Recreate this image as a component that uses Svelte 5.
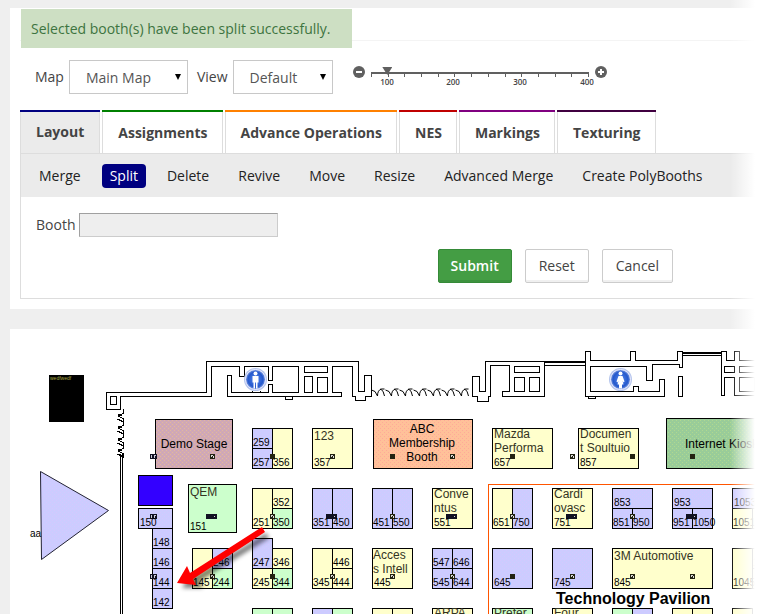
<script>
  let mapName = $state('Main Map');
  let view = $state('Default');
  let zoom = $state(100);
  let booth = $state('');

  const tabs = [
    { name: 'Layout', color: '#000080' },
    { name: 'Assignments', color: '#008000' },
    { name: 'Advance Operations', color: '#ff8000' },
    { name: 'NES', color: '#c00000' },
    { name: 'Markings', color: '#800080' },
    { name: 'Texturing', color: '#400040' }
  ];
  const actions = ['Merge', 'Split', 'Delete', 'Revive', 'Move', 'Resize', 'Advanced Merge', 'Create PolyBooths'];
  const ticks = Array.from({ length: 14 }, (_, i) => 75 + i * 25);

  const Y = '#ffffcc';
  const G = '#ccffcc';
  const L = 'url(#lav)';

  // x, y, width, height, fill, number
  const booths = [
    [138, 508, 34, 20, L, '150'],
    [152, 528, 20, 20, L, '148'],
    [152, 548, 20, 20, L, '146'],
    [152, 568, 20, 20, L, '144'],
    [152, 588, 20, 20, L, '142'],
    [252, 428, 20, 20, L, '259'],
    [252, 448, 20, 20, L, '257'],
    [272, 428, 20, 40, Y, '356'],
    [312, 428, 40, 40, Y, '357'],
    [492, 428, 60, 40, Y, '657'],
    [578, 428, 60, 40, Y, '857'],
    [188, 484, 48, 48, G, '151'],
    [252, 488, 20, 40, Y, '251'],
    [272, 488, 20, 20, Y, '352'],
    [272, 508, 20, 20, G, '350'],
    [312, 488, 20, 40, L, '351'],
    [332, 488, 20, 40, L, '450'],
    [372, 488, 20, 40, L, '451'],
    [392, 488, 20, 40, L, '550'],
    [432, 488, 40, 40, Y, '551'],
    [492, 488, 20, 40, Y, '651'],
    [512, 488, 20, 40, L, '750'],
    [552, 488, 40, 40, Y, '751'],
    [612, 488, 40, 20, L, '853'],
    [612, 508, 20, 20, L, '851'],
    [632, 508, 20, 20, L, '950'],
    [672, 488, 40, 20, L, '953'],
    [672, 508, 20, 20, L, '951'],
    [692, 508, 20, 20, L, '1050'],
    [732, 488, 40, 20, L, '1053'],
    [732, 508, 20, 20, Y, '1051'],
    [752, 508, 20, 20, Y, ''],
    [192, 548, 20, 40, Y, '145'],
    [212, 548, 20, 20, L, '246'],
    [212, 568, 20, 20, G, '244'],
    [252, 538, 20, 30, L, '247'],
    [252, 568, 20, 20, Y, '245'],
    [272, 548, 20, 20, Y, '346'],
    [272, 568, 20, 20, G, '344'],
    [312, 548, 20, 40, Y, '345'],
    [332, 548, 20, 20, Y, '446'],
    [332, 568, 20, 20, Y, '444'],
    [372, 548, 40, 40, Y, '445'],
    [432, 548, 20, 20, L, '547'],
    [452, 548, 20, 20, L, '646'],
    [432, 568, 20, 20, L, '545'],
    [452, 568, 20, 20, L, '644'],
    [492, 548, 40, 40, L, '645'],
    [552, 548, 40, 40, L, '745'],
    [612, 548, 100, 40, Y, '845'],
    [732, 548, 20, 40, Y, '1045'],
    [752, 548, 20, 20, Y, '1'],
    [752, 568, 20, 20, Y, ''],
    [252, 608, 20, 20, G, ''],
    [272, 608, 20, 20, G, ''],
    [312, 608, 20, 20, L, ''],
    [332, 608, 20, 20, G, ''],
    [372, 608, 20, 20, Y, ''],
    [392, 608, 20, 20, Y, ''],
    [432, 608, 40, 20, Y, ''],
    [492, 608, 40, 20, G, ''],
    [552, 608, 40, 20, Y, ''],
    [612, 608, 20, 20, G, ''],
    [632, 608, 20, 20, L, ''],
    [672, 608, 20, 20, Y, ''],
    [692, 608, 20, 20, Y, ''],
    [732, 608, 20, 20, Y, '']
  ];

  const names = [
    [314, 440, '123'],
    [494, 438, 'Mazda'],
    [494, 452, 'Performa'],
    [580, 438, 'Documen'],
    [580, 452, 't Soultuio'],
    [190, 496, 'QEM'],
    [434, 498, 'Conve'],
    [434, 512, 'ntus'],
    [554, 498, 'Cardi'],
    [554, 512, 'ovasc'],
    [373, 559, 'Acces'],
    [373, 573, 's Intell'],
    [614, 560, '3M Automotive'],
    [434, 617, 'ARPA'],
    [494, 617, 'Prefer'],
    [554, 617, 'Four']
  ];

  // x, y, style: open outline, solid block or wide strip
  const markers = [
    [150, 454, 'wide'], [210, 454, 'open'], [270, 454, 'solid'], [330, 454, 'open'],
    [390, 454, 'solid'], [450, 454, 'open'], [510, 454, 'solid'], [570, 454, 'open'],
    [630, 454, 'solid'], [690, 454, 'solid'], [150, 514, 'wide'], [206, 514, 'strip'],
    [270, 514, 'open'], [326, 514, 'strip'], [390, 514, 'open'], [446, 514, 'strip'],
    [510, 514, 'open'], [566, 514, 'strip'], [630, 514, 'open'], [686, 514, 'strip'],
    [150, 574, 'wide'], [210, 574, 'open'], [270, 574, 'solid'], [330, 574, 'open'],
    [390, 574, 'open'], [450, 574, 'open'], [510, 574, 'solid'], [570, 574, 'open'],
    [630, 574, 'open'], [690, 574, 'open']
  ];

  const scallops = Array.from({ length: 7 }, (_, i) => 371 + i * 14);
  const curtain = [409, 421, 433, 444];
</script>

<div class="page">
  <section class="panel controls">
    <div class="strip">
      <p class="alert" role="status">Selected booth(s) have been split successfully.</p>
    </div>

    <div class="toolbar">
      <label for="map">Map</label>
      <span class="pick map">
        <select id="map" bind:value={mapName}><option>Main Map</option></select>
        <svg width="6" height="6" viewBox="0 0 6 6"><path d="M0 0H6L3 6z" /></svg>
      </span>
      <label for="view">View</label>
      <span class="pick view">
        <select id="view" bind:value={view}><option>Default</option></select>
        <svg width="6" height="6" viewBox="0 0 6 6"><path d="M0 0H6L3 6z" /></svg>
      </span>
      <div class="zoom">
        <button type="button" aria-label="Zoom out" onclick={() => (zoom = Math.max(75, zoom - 25))}>
          <svg width="12" height="12" viewBox="0 0 12 12"><circle cx="6" cy="6" r="6" fill="#606060" /><path d="M3 6H9" stroke="#fff" stroke-width="2" /></svg>
        </button>
        <div class="scale">
          <input type="range" min="75" max="400" step="25" aria-label="Zoom" bind:value={zoom} />
          <svg width="228" height="22" viewBox="0 0 228 22">
            <path d="M5 3H223" stroke="#606060" stroke-width="2" />
            {#each ticks as t}
              <path d="M{5.5 + Math.round(((t - 75) / 325) * 217)} 2V7" stroke="#606060" />
            {/each}
            {#each [100, 200, 300, 400] as n}
              <text x={5 + Math.round(((n - 75) / 325) * 217) - 1} y="15" text-anchor="middle">{n}</text>
            {/each}
          </svg>
        </div>
        <button type="button" aria-label="Zoom in" onclick={() => (zoom = Math.min(400, zoom + 25))}>
          <svg width="12" height="12" viewBox="0 0 12 12"><circle cx="6" cy="6" r="6" fill="#606060" /><path d="M3 6H9M6 3V9" stroke="#fff" stroke-width="2" /></svg>
        </button>
      </div>
    </div>

    <nav class="tabs">
      {#each tabs as tab, i}
        <a href="#{tab.name}" class:active={i === 0} style="border-top-color: {tab.color}"><span>{tab.name}</span></a>
      {/each}
    </nav>

    <div class="box">
      <nav class="actions">
        {#each actions as a}
          <a href="#{a}" class:current={a === 'Split'}>{a}</a>
        {/each}
      </nav>
      <form onsubmit={(e) => e.preventDefault()}>
        <div class="field">
          <label for="booth">Booth</label>
          <input id="booth" type="text" bind:value={booth} />
        </div>
        <div class="buttons">
          <button class="primary" type="submit">Submit</button>
          <button type="reset">Reset</button>
          <button type="button">Cancel</button>
        </div>
      </form>
    </div>
  </section>

  <section class="panel floor">
    <svg width="751" height="285" viewBox="10 329 751 285" shape-rendering="crispEdges">
      <defs>
        <pattern id="lav" width="4" height="4" patternUnits="userSpaceOnUse">
          <rect width="4" height="4" fill="#ccccff" />
          <path d="M0 0h1v1h-1zM2 2h1v1h-1z" fill="#d4c8ff" />
        </pattern>
        <pattern id="rose" width="4" height="4" patternUnits="userSpaceOnUse">
          <rect width="4" height="4" fill="#d2a9b2" />
          <path d="M0 0h1v1h-1zM2 2h1v1h-1z" fill="#e0b8a0" />
          <path d="M2 0h1v1h-1zM0 2h1v1h-1z" fill="#c8a4c4" />
        </pattern>
        <pattern id="peach" width="4" height="4" patternUnits="userSpaceOnUse">
          <rect width="4" height="4" fill="#ffc199" />
          <path d="M0 0h1v1h-1zM2 2h1v1h-1z" fill="#ffaa99" />
        </pattern>
        <pattern id="mint" width="4" height="4" patternUnits="userSpaceOnUse">
          <rect width="4" height="4" fill="#99cc99" />
          <path d="M0 0h1v1h-1zM2 2h1v1h-1z" fill="#b0d890" />
        </pattern>
        <radialGradient id="disc">
          <stop offset="0" stop-color="#5588ee" />
          <stop offset="0.75" stop-color="#2458cc" />
          <stop offset="1" stop-color="#88a4e4" />
        </radialGradient>
        <filter id="soft" x="-20%" y="-20%" width="140%" height="140%"><feGaussianBlur stdDeviation="2" /></filter>
      </defs>

      <g fill="none" stroke="#000">
        <path d="M106.5 392.5H206.5V361.5H358.5V391.5H364.5V375.5H371.5V396.5H365.5V400.5H355.5V396.5H352.5V366.5H332.5V392.5H341.5V396.5H227.5V375.5H231.5V392.5H268.5V384.5H272.5V392.5H298.5V366.5H272.5V380.5H268.5V366.5H244.5V376.5H239.5V366.5H211.5V396.5H120.5V409.5H106.5z" />
        <path d="M110.5 396.5h6v8h-6zM304.5 366.5h23v6h-23zM304.5 376.5h8v16h-8zM317.5 377.5h10v15h-10zM285.5 396.5v3h7v-3M252.5 391v2M260.5 391v2" />
        <path d="M472.5 376.5H479.5V391.5H485.5V361.5H544.5V396.5H502.5V391.5H509.5V365.5H490.5V396.5H488.5V401.5H477.5V396.5H472.5z" />
        <path d="M514.5 366.5h25v6h-25zM514.5 377.5h10v14h-10zM529.5 377.5h10v14h-10z" />
        <path d="M585.5 351.5H590.5V360.5H630.5V351.5H635.5V360.5H677.5V351.5H682.5V367.5H679.5V364.5H652.5V380.5H646.5V366.5H590.5V391.5H633.5V386.5H638.5V391.5H659.5V379.5H664.5V396.5H585.5zM588.5 396.5v2h7v-2M678.5 376.5h4v20h-4z" />
        <path d="M761 360.5H739.5V351.5H734.5V360.5H726.5V351.5H721.5V395.5H724.5V377.5H734.5V395.5H761M724.5 366.5h10v6h-10zM761 366.5H739.5V372.5H761M739.5 377.5h15v14h-15z" />
        <path d="M544 362H586M682 353H722" stroke-width="2" />
        <path d="M544 365.5H586M682 355.5H722" />
        <path d="M120.5 454V614M122.5 454V614" />
        {#each curtain as y}
          <path d="M123.5 {y}v4q-2 2 -6 2h4l-3 1l5 3v3l-6 -3" />
        {/each}
        {#each scallops as x}
          <path d="M{x + 0.5} 390q4 0 6 6q0 -6 4 -7h3M{x + 9.5} 389q3 1 4 7" shape-rendering="auto" />
        {/each}
      </g>

      <rect x="49" y="375" width="35" height="47" />
      <text x="50" y="380" class="tiny">wedfwedf</text>
      <path d="M40.5 471.5L108.5 510.5L41.5 559.5z" fill="url(#lav)" stroke="#223" shape-rendering="auto" />
      <text x="30" y="537" class="num">aa</text>
      <path d="M488.5 614V484.5H761" fill="none" stroke="#ff5500" />

      <g stroke="#000">
        <rect x="155.5" y="419.5" width="77" height="49" fill="url(#rose)" />
        <rect x="373.5" y="419.5" width="99" height="49" fill="url(#peach)" />
        <rect x="666.5" y="418.5" width="110" height="50" fill="url(#mint)" />
        <rect x="138.5" y="475.5" width="34" height="30" fill="#3300ff" />
        {#each booths as [x, y, w, h, fill]}
          <rect x={x + 0.5} y={y + 0.5} width={w} height={h} {fill} />
        {/each}
      </g>

      {#each markers as [x, y, kind]}
        {#if kind === 'open'}
          <rect {x} {y} width="5" height="5" fill="#221" />
          <path d="M{x + 1} {y + 1}h2v1h-1v1h-1zM{x + 3} {y + 2}h1v2h-1z" fill="#ddd" />
        {:else if kind === 'solid'}
          <rect {x} {y} width="5" height="5" fill="#221" />
        {:else if kind === 'wide'}
          <rect {x} {y} width="7" height="5" fill="#112" />
          <path d="M{x + 1} {y + 1}h1v3h-1zM{x + 4} {y + 1}h2v1h-1v2h-1z" fill="#ccd" />
        {:else}
          <rect {x} {y} width="11" height="5" fill="#112" />
          <rect x={x + 8} y={y + 2} width="1" height="1" fill="#ddd" />
        {/if}
      {/each}

      {#each booths as [x, y, w, h, , num]}
        {#if num}
          <text x={x + (w > 20 ? 2 : 1)} y={y + h - 2} class="num">{num}</text>
        {/if}
      {/each}
      {#each names as [x, y, text]}
        <text {x} {y} class="name">{text}</text>
      {/each}
      <g class="hall" text-anchor="middle">
        <text x="194" y="448">Demo Stage</text>
        <text x="422" y="433">ABC</text>
        <text x="422" y="447">Membership</text>
        <text x="422" y="461">Booth</text>
      </g>
      <text x="685" y="448" class="hall">Internet Kiosk</text>
      <text x="556" y="604" class="title">Technology Pavilion</text>

      <g shape-rendering="auto">
        {#each [[255.5, 'm'], [620.5, 'f']] as [x, kind]}
          <g transform="translate({x} 379.5)">
            <circle r="11.5" fill="#b4c4ec" />
            <circle r="10" fill="url(#disc)" stroke="#eef" />
            <circle cy="-6" r="2" fill="#fff" />
            {#if kind === 'm'}
              <path d="M-3 -3.5H3V3H2V9H0.5V3H-0.5V9H-2V3H-3z" fill="#fff" />
            {:else}
              <path d="M-2 -3.5H2L4 2L3 3L2 1L3 5H1.5V9H-1.5V5H-3L-2 1L-3 3L-4 2z" fill="#fff" />
            {/if}
          </g>
        {/each}
        <path d="M269 538L200 581L203 588L182 588L192 572L195 576L266 533z" fill="#000" opacity="0.5" filter="url(#soft)" />
        <path d="M262 527L265 532L193 579L196 585L177 583L187 566L190 573z" fill="#ff0000" />
      </g>
    </svg>
  </section>
  <div class="fade"></div>
</div>

<style>
  :global(body) {
    margin: 0;
    background: #efefef;
  }
  .page {
    position: relative;
    padding: 8px 0 0 10px;
    overflow: hidden;
    font: 14px/20px 'Open Sans', sans-serif;
    color: #444;
  }
  .panel {
    background: #fff;
    overflow: hidden;
  }
  .controls {
    position: relative;
    padding: 0 0 10px 10px;
    margin-bottom: 20px;
  }
  .strip {
    height: 32px;
    border-bottom: 1px solid #f4f4f4;
  }
  .alert {
    position: absolute;
    left: 11px;
    top: 1px;
    margin: 0;
    padding: 10px 22px 9px 10px;
    background: #cddfc3;
    color: #3d7440;
  }
  .toolbar {
    display: flex;
    align-items: center;
    height: 34px;
    margin: 19px 0 16px;
    padding-left: 15px;
  }
  .pick {
    position: relative;
    margin: 0 9px 0 5px;
  }
  .pick.map {
    width: 119px;
  }
  .pick.view {
    width: 100px;
  }
  .pick select {
    appearance: none;
    display: block;
    width: 100%;
    height: 34px;
    padding: 2px 16px 0;
    border: 1px solid #c8c8c8;
    border-radius: 0;
    background: #fff;
    font: inherit;
    color: #555;
  }
  .pick svg {
    position: absolute;
    right: 7px;
    top: 14px;
    pointer-events: none;
  }
  .zoom {
    display: flex;
    align-items: flex-start;
    height: 22px;
    margin-left: 11px;
  }
  .zoom button {
    padding: 0;
    border: 0;
    background: none;
    height: 12px;
    line-height: 0;
  }
  .scale {
    position: relative;
    height: 22px;
    width: 229px;
    margin: 4px 0 0 1px;
  }
  .zoom svg {
    display: block;
  }
  .scale text {
    font: 600 8px 'Open Sans', sans-serif;
    fill: #444;
  }
  .scale input {
    appearance: none;
    position: absolute;
    left: 0;
    top: -4px;
    width: 228px;
    height: 10px;
    margin: 0;
    background: transparent;
  }
  .scale input::-webkit-slider-thumb {
    appearance: none;
    width: 10px;
    height: 8px;
    background: #606060;
    clip-path: polygon(0 0, 100% 0, 50% 100%);
  }
  .tabs {
    display: flex;
    gap: 2px;
  }
  .tabs a {
    border-top: 2px solid;
    color: #444;
    font-weight: 700;
    text-decoration: none;
  }
  .tabs span {
    display: block;
    padding: 11px 14px 10px 15px;
    border: 1px solid #ddd;
    border-width: 0 1px;
  }
  .tabs .active span {
    background: #ebebeb;
    padding: 10px 15px 11px;
  }
  .box {
    border: 1px solid #ddd;
    border-right: 0;
  }
  .actions {
    display: flex;
    gap: 13px;
    padding: 10px 10px 9px;
    background: #ebebeb;
  }
  .actions a {
    padding: 2px 8px;
    border-radius: 4px;
    color: #222;
    text-decoration: none;
    white-space: nowrap;
  }
  .actions .current {
    background: #000080;
    color: #fff;
  }
  form {
    padding: 16px 88px 15px 15px;
  }
  .field {
    display: flex;
    align-items: center;
    gap: 4px;
  }
  .field input {
    box-sizing: border-box;
    width: 199px;
    height: 24px;
    border: 1px solid #ccc;
    border-top-color: #a0a0a0;
    border-left-color: #a0a0a0;
    background: #eee;
    font: inherit;
  }
  .buttons {
    display: flex;
    justify-content: flex-end;
    gap: 13px;
    margin-top: 12px;
  }
  .buttons button {
    height: 34px;
    padding: 0 13px;
    border: 1px solid #ccc;
    border-radius: 2px;
    background: #fff;
    box-shadow: inset 0 -2px #f0f0f0;
    font: inherit;
    color: #444;
  }
  .buttons .primary {
    padding: 0 12px;
    border-color: #358a38;
    background: #449d44;
    box-shadow: inset 0 -2px #3d923e;
    color: #fff;
    font-weight: 600;
  }
  .floor svg {
    display: block;
  }
  .floor text {
    font-family: 'Liberation Sans', sans-serif;
  }
  .floor .num {
    font-size: 10px;
  }
  .floor .name {
    font-size: 12px;
    fill: #332;
  }
  .floor .hall {
    font-size: 12px;
  }
  .floor .title {
    font-size: 16px;
    font-weight: 700;
  }
  .floor .tiny {
    font-size: 5px;
    fill: #aa4;
  }
  .fade {
    position: absolute;
    top: 0;
    right: 0;
    bottom: 0;
    width: 31px;
    background: linear-gradient(to right, rgba(255, 255, 255, 0), #fff 80%);
    pointer-events: none;
  }
</style>
